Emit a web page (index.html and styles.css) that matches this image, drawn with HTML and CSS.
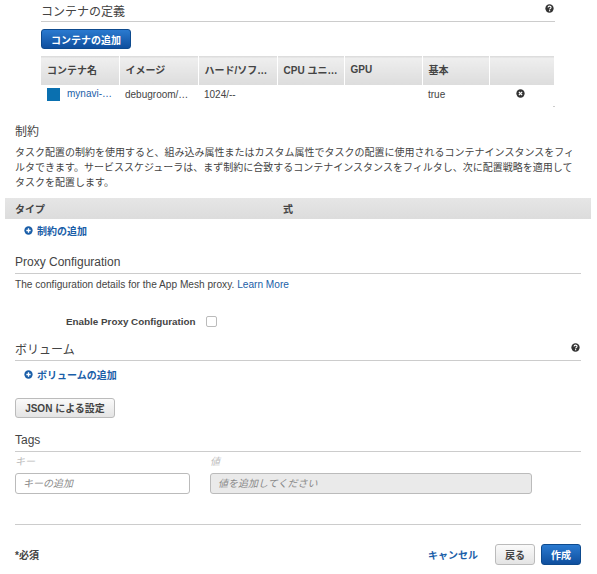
FILE: index.html
```html
<!DOCTYPE html>
<html lang="ja">
<head>
    <meta charset="UTF-8">
    <meta name="viewport" content="width=device-width, initial-scale=1.0">
    <title>タスク定義の作成</title>
    <link rel="stylesheet" href="styles.css">
</head>
<body>
    <section class="containers">
        <div class="heading heading-first">
            <h2>コンテナの定義</h2>
            <svg class="help" viewBox="0 0 10 10"><circle cx="5" cy="5" r="4.6" fill="#333"/><path d="M3.4 4c0-2.1 3.3-2.1 3.3-.2 0 1.2-1.6 1.1-1.6 2.3" fill="none" stroke="#fff" stroke-width="1.2"/><rect x="4.4" y="6.8" width="1.4" height="1.3" fill="#fff"/></svg>
        </div>
        <button class="btn btn-primary btn-add">コンテナの追加</button>
        <table class="grid">
            <thead>
                <tr>
                    <th class="c1">コンテナ名</th>
                    <th class="c2">イメージ</th>
                    <th class="c3">ハード/ソフ…</th>
                    <th class="c4">CPU ユニ…</th>
                    <th class="c5">GPU</th>
                    <th class="c6">基本</th>
                    <th class="c7"></th>
                </tr>
            </thead>
            <tbody>
                <tr>
                    <td class="name"><span class="swatch"></span><a href="#">mynavi-…</a></td>
                    <td>debugroom/…</td>
                    <td>1024/--</td>
                    <td></td>
                    <td></td>
                    <td>true</td>
                    <td class="remove">
                        <svg viewBox="0 0 10 10"><circle cx="5" cy="5" r="4.6" fill="#333"/><path d="M3.2 3.2l3.6 3.6M6.8 3.2l-3.6 3.6" stroke="#fff" stroke-width="1.4"/></svg>
                    </td>
                </tr>
            </tbody>
        </table>
    </section>

    <section class="constraints">
        <h2 class="plain-title">制約</h2>
        <p class="desc">タスク配置の制約を使用すると、組み込み属性またはカスタム属性でタスクの配置に使用されるコンテナインスタンスをフィルタできます。サービススケジューラは、まず制約に合致するコンテナインスタンスをフィルタし、次に配置戦略を適用してタスクを配置します。</p>
    </section>
    <div class="bar">
        <span class="bar-type">タイプ</span>
        <span>式</span>
    </div>

    <main class="lower">
        <a class="add-link add-first" href="#">
            <svg viewBox="0 0 10 10"><circle cx="5" cy="5" r="4.6" fill="#1a5ea8"/><path d="M2.6 5h4.8M5 2.6v4.8" stroke="#fff" stroke-width="1.5"/></svg>
            制約の追加
        </a>

        <div class="heading heading-proxy"><h2>Proxy Configuration</h2></div>
        <p class="proxy-desc">The configuration details for the App Mesh proxy. <a href="#">Learn More</a></p>
        <div class="proxy-row">
            <label for="proxy">Enable Proxy Configuration</label>
            <input type="checkbox" id="proxy" class="check">
        </div>

        <div class="heading heading-volume">
            <h2>ボリューム</h2>
            <svg class="help" viewBox="0 0 10 10"><circle cx="5" cy="5" r="4.6" fill="#333"/><path d="M3.4 4c0-2.1 3.3-2.1 3.3-.2 0 1.2-1.6 1.1-1.6 2.3" fill="none" stroke="#fff" stroke-width="1.2"/><rect x="4.4" y="6.8" width="1.4" height="1.3" fill="#fff"/></svg>
        </div>
        <a class="add-link add-volume" href="#">
            <svg viewBox="0 0 10 10"><circle cx="5" cy="5" r="4.6" fill="#1a5ea8"/><path d="M2.6 5h4.8M5 2.6v4.8" stroke="#fff" stroke-width="1.5"/></svg>
            ボリュームの追加
        </a>
        <button class="btn btn-default btn-json">JSON による設定</button>

        <div class="heading heading-tags"><h2>Tags</h2></div>
        <div class="tags">
            <div class="tag-key">
                <label>キー</label>
                <input type="text" placeholder="キーの追加">
            </div>
            <div class="tag-value">
                <label>値</label>
                <input type="text" placeholder="値を追加してください" disabled>
            </div>
        </div>

        <footer class="actions">
            <span class="required">*必須</span>
            <a class="cancel" href="#">キャンセル</a>
            <button class="btn btn-default btn-back">戻る</button>
            <button class="btn btn-primary btn-create">作成</button>
        </footer>
    </main>
</body>
</html>
```

FILE: styles.css
```css
body {
    margin: 0;
    font-family: "Liberation Sans", "Noto Sans CJK JP", sans-serif;
    font-size: 10px;
    color: #444;
    background-color: #fff;
    overflow: hidden;
}

a {
    color: #1a5ea8;
    text-decoration: none;
}

h2 {
    margin: 0;
    font-size: 12px;
    font-weight: normal;
    color: #444;
}

.heading {
    display: flex;
    justify-content: space-between;
    align-items: center;
    height: 21px;
    border-bottom: 1px solid #ccc;
}

.heading h2 {
    margin-bottom: 1px;
}

.help {
    width: 9px;
    height: 9px;
    margin: 0 1px 4px 0;
}

.btn {
    display: block;
    padding: 0;
    font-family: inherit;
    font-size: 10px;
    font-weight: bold;
    border-radius: 3px;
    cursor: pointer;
}

.btn-primary {
    color: #fff;
    background: linear-gradient(#2a7ad0, #0f4f9e);
    border: 1px solid #0d4a8e;
}

.btn-default {
    color: #444;
    background: linear-gradient(#fafafa, #e4e4e4);
    border: 1px solid #bbb;
}

/* コンテナの定義 */
.containers {
    width: 514px;
    margin-left: 41px;
}

.containers::after {
    content: "";
    display: block;
    width: 2px;
    height: 1px;
    margin-left: 512px;
    background-color: #ccc;
}

.btn-add {
    width: 90px;
    height: 20px;
    margin-top: 7px;
}

.grid {
    width: 514px;
    margin-top: 7px;
    border-collapse: collapse;
    table-layout: fixed;
}

.grid th,
.grid td {
    box-sizing: border-box;
    padding: 0 6px 2px;
    font-size: 10px;
    text-align: left;
    white-space: nowrap;
}

.grid th {
    height: 28px;
    color: #444;
    background: linear-gradient(#efefef, #dcdcdc);
    border-top: 1px solid #ddd;
    border-right: 1px solid #fff;
}

.grid td {
    height: 21px;
}

.c1 {
    width: 78px;
}

.c2, .c3 {
    width: 79px;
}

.c4, .c6 {
    width: 67px;
}

.c5 {
    width: 78px;
}

.swatch {
    display: inline-block;
    width: 13px;
    height: 13px;
    margin-right: 7px;
    vertical-align: middle;
    background-color: #0a70b0;
}

.remove svg {
    display: block;
    width: 9px;
    height: 9px;
    margin: 0 0 2px 21px;
}

/* 制約 */
.constraints {
    margin: 18px 16px 0 15px;
}

.plain-title {
    line-height: 14px;
}

.desc {
    margin: 6px 0 0;
    line-height: 15px;
    color: #444;
}

.bar {
    display: flex;
    align-items: center;
    height: 21px;
    margin: 8px 6px 0 5px;
    font-weight: bold;
    background: linear-gradient(#e6e6e6, #dcdcdc);
}

.bar-type {
    width: 268px;
    margin-left: 10px;
}

.lower {
    margin: 0 16px 0 15px;
}

.add-link {
    display: flex;
    align-items: center;
    gap: 4px;
    margin-left: 9px;
    font-weight: bold;
}

.add-link svg {
    width: 9px;
    height: 9px;
}

.add-first {
    margin-top: 5px;
    height: 14px;
}

.heading-proxy {
    margin-top: 14px;
}

.proxy-desc {
    margin: 3px 0 0;
    line-height: 15px;
    font-size: 10.15px;
}

.proxy-row {
    display: flex;
    align-items: center;
    margin-top: 23px;
    height: 14px;
}

.proxy-row label {
    margin-left: 51px;
    font-size: 9.85px;
    font-weight: bold;
}

.check {
    appearance: none;
    width: 11px;
    height: 11px;
    margin: 0 0 0 10px;
    border: 1px solid #bbb;
    border-radius: 2px;
    background-color: #fff;
}

.heading-volume {
    margin-top: 10px;
}

.add-volume {
    margin-top: 7px;
    height: 14px;
}

.btn-json {
    width: 100px;
    height: 20px;
    margin-top: 16px;
}

.heading-tags {
    height: 22px;
    margin-top: 11px;
}

.heading-tags h2 {
    margin-bottom: 0;
}

.tags {
    display: flex;
    gap: 20px;
    margin-top: 1px;
}

.tags label {
    display: block;
    height: 14px;
    font-size: 10px;
    font-style: italic;
    color: #bbb;
}

.tags input {
    display: block;
    box-sizing: border-box;
    height: 21px;
    margin-top: 6px;
    padding: 0 7px;
    font-family: inherit;
    font-size: 10px;
    font-style: italic;
    border: 1px solid #bbb;
    border-radius: 3px;
}

.tags input::placeholder {
    color: #888;
}

.tag-key input {
    width: 175px;
}

.tag-value input {
    width: 322px;
    background-color: #eaeaea;
}

.actions {
    display: flex;
    align-items: center;
    margin-top: 30px;
    padding-top: 19px;
    border-top: 1px solid #ccc;
}

.required {
    flex: 1;
    font-weight: bold;
}

.cancel {
    margin-right: 17px;
    font-weight: bold;
}

.btn-back, .btn-create {
    width: 40px;
    height: 21px;
}

.btn-back {
    margin-right: 6px;
}
```
